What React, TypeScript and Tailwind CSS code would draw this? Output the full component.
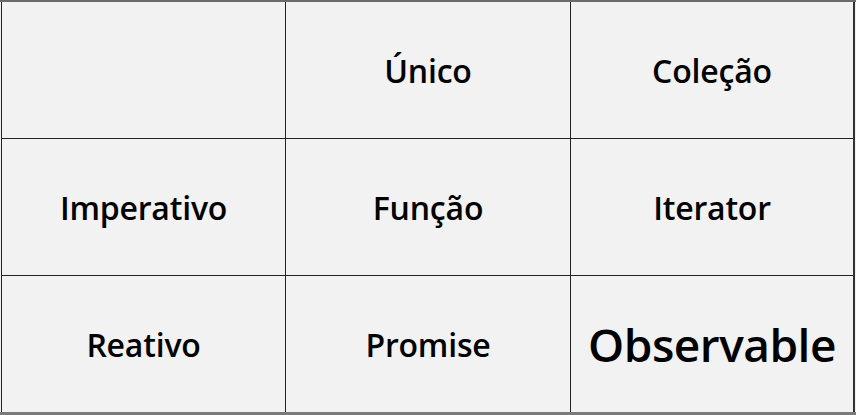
const cells: { text: string; big?: boolean }[] = [
  { text: "" },
  { text: "Único" },
  { text: "Coleção" },
  { text: "Imperativo" },
  { text: "Função" },
  { text: "Iterator" },
  { text: "Reativo" },
  { text: "Promise" },
  { text: "Observable", big: true },
];

export default function App() {
  return (
    <div className="w-[856px] h-[415px] bg-[#f2f2f2] border-t-2 border-b-[3px] border-t-[#6b6b6b] border-b-[#7a7a7a] overflow-hidden">
      <div
        className="
          ml-px
          w-[854px]
          h-[410px]
          grid
          grid-cols-[283px_284px_282px]
          grid-rows-[136px_136px_136px]
          gap-px
          bg-[#222]
          border-l
          border-r-2
          border-l-[#222]
          border-r-[#333]
          font-['Open_Sans',sans-serif]
          text-black
        "
      >
        {cells.map((c, i) => (
          <div
            key={i}
            className={
              c.big
                ? "bg-[#f2f2f2] flex items-center justify-center text-[46px] font-semibold tracking-[-0.5px]"
                : "bg-[#f2f2f2] flex items-center justify-center pt-0.5 text-[32px] font-semibold tracking-[-0.2px]"
            }
          >
            {c.text}
          </div>
        ))}
      </div>
    </div>
  );
}
